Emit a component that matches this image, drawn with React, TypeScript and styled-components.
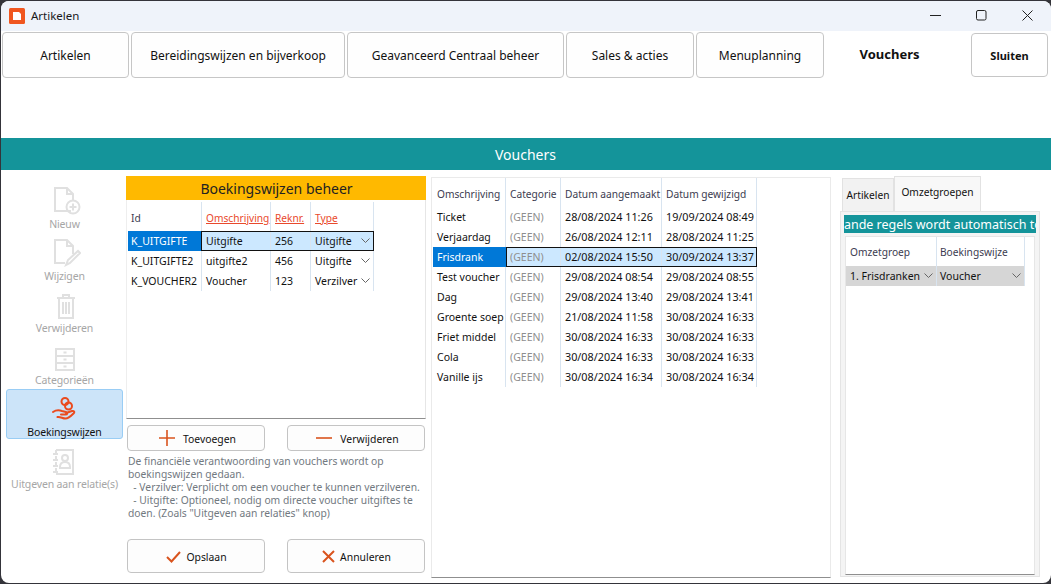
import React from "react";
import styled, { createGlobalStyle, css } from "styled-components";

const Global = createGlobalStyle`
  html, body { margin: 0; padding: 0; background: #34343a; }
  body { font-family: "Noto Sans", "Liberation Sans", sans-serif; font-size: 11px; color: #111; }
  #root { width: 1051px; height: 584px; overflow: hidden; }
  * { box-sizing: border-box; }
`;

const Win = styled.div`
  width: 1050px; height: 582px; background: #fff; display: flex; flex-direction: column;
  margin-top: 1px; margin-left: 1px; border-radius: 8px; overflow: hidden;
`;
const TitleBar = styled.div`
  height: 30px; flex: none; background: #eff3fa; display: flex; align-items: center; padding: 0 0 1px 8px;
`;
const TitleText = styled.span`
  font-size: 11.5px; margin-left: 6px; color: #1a1a1a; padding-bottom: 1px;
`;
const WinControls = styled.div`
  margin-left: auto; margin-right: 1px; display: flex; align-items: center; height: 100%;
`;
const WinButton = styled.div`
  width: 46px; height: 100%; display: flex; align-items: center; justify-content: center; padding-bottom: 1px;
`;
const TabBar = styled.div`
  height: 46px; flex: none; margin-top: 1px; padding: 0 3px 0 1px; display: flex; gap: 2px; align-items: stretch;
`;
const Tab = styled.div<{ $w: number; $active?: boolean }>`
  width: ${p => p.$w}px; flex: none; display: flex; align-items: center; justify-content: center;
  background: #fefefe; border-radius: 4px; font-size: 12px; color: #111;
  ${p => p.$active
    ? css`font-weight: 700; font-size: 13px; padding-bottom: 2px; background: #fff;`
    : css`border: 1px solid #c6c6c6;`}
`;
const CloseTab = styled.div`
  width: 77px; flex: none; margin: 1px 0 1px auto; display: flex; align-items: center; justify-content: center;
  border: 1px solid #c6c6c6; border-radius: 4px; font-weight: 700; font-size: 11px;
`;
const Spacer = styled.div`
  height: 60px; flex: none;
`;
const Banner = styled.div`
  height: 32px; flex: none; background: #14949a; color: #fff; font-size: 14px;
  display: flex; align-items: center; justify-content: center; padding-right: 1px;
`;
const Body = styled.div`
  flex: 1; min-height: 0; display: flex;
`;
const Sidebar = styled.div`
  width: 124px; flex: none; padding: 11px 2px 0 5px; display: flex; flex-direction: column; gap: 2px;
`;
const SideItem = styled.div<{ $active?: boolean }>`
  height: 50px; display: flex; flex-direction: column; align-items: center; justify-content: flex-end;
  border-radius: 3px; font-size: 10.5px; letter-spacing: -0.15px; color: ${p => p.$active ? "#111" : "#a6a6a6"}; white-space: nowrap;
  svg { display: block; flex: none; }
  span { line-height: 14px; height: 14px; margin-top: 2px; }
  ${p => p.$active && css`
    background: #cce4f9; border: 1px solid #99cdf5;
    span { margin-bottom: -1px; }
  `}
`;
const MidPanel = styled.div`
  width: 300px; flex: none; margin-left: 1px; padding-top: 6px; display: flex; flex-direction: column;
`;
const PanelHead = styled.div`
  height: 24px; flex: none; background: #ffb900; display: flex; align-items: center; justify-content: center; font-size: 14px; color: #222; padding-left: 1px;
`;
const TableBox = styled.div`
  height: 219px; flex: none; background: #fff; border-bottom: 1px solid #8f8f8f; border-left: 1px solid #eee; border-right: 1px solid #e6e6e6; padding: 2px 0 0 1px;
  & > div > div:first-child { padding-left: 3px; }
`;
const Row = styled.div<{ $cols: string; $h: number; $focusLeft?: number; $focusW?: number }>`
  display: grid; grid-template-columns: ${p => p.$cols}; height: ${p => p.$h}px; position: relative;
  ${p => p.$focusLeft !== undefined && css`
    &::after { content: ""; position: absolute; top: 0; bottom: 0; left: ${p.$focusLeft}px; width: ${p.$focusW}px; border: 1px solid #111; pointer-events: none; }
  `}
`;
const Cell = styled.div<{ $tone?: "sel" | "focus" | "muted" | "gray"; $num?: boolean }>`
  display: flex; align-items: center; justify-content: space-between; padding: 0 3px 1px 4px; white-space: nowrap; overflow: hidden;
  border-right: 1px solid ${p => p.$tone === "sel" ? "#0078d7" : "#d8e4f0"}; font-size: ${p => p.$num ? 10.8 : 10.5}px;
  color: ${p => p.$tone === "muted" ? "#8e8e8e" : p.$tone === "sel" ? "#fff" : "#111"};
  ${p => p.$tone === "sel" && css`background: #0078d7;`}
  ${p => p.$tone === "focus" && css`background: #cce8ff;`}
  ${p => p.$tone === "gray" && css`background: #d6d6d6;`}
`;
const HeadCell = styled.div<{ $link?: boolean; $top: number }>`
  display: flex; align-items: center; padding: ${p => p.$top}px 1px 0 4px; white-space: nowrap;
  border-right: 1px solid #d8e4f0; font-size: 10.2px; color: ${p => p.$link ? "#e9492c" : "#3c3c50"};
  ${p => p.$link && css`text-decoration: underline;`}
`;
const MutedFocus = styled(Cell)`
  background: #cce8ff; color: #8e8e8e;
`;
const BtnRow = styled.div<{ $top: number }>`
  display: flex; justify-content: space-between; padding: 0 1px; margin-top: ${p => p.$top}px;
`;
const Btn = styled.div<{ $h: number }>`
  width: 138px; height: ${p => p.$h}px; border: 1px solid #c4c4c4; border-radius: 4px; background: #fdfdfd;
  display: flex; align-items: center; justify-content: center; gap: 8px; font-size: 10.4px; padding: 1px 0 0 3px;
  svg { margin-top: -1px; }
`;
const SaveBtn = styled(Btn)`
  gap: 5px; padding: 2px 0 0 1px;
`;
const Help = styled.div`
  margin: 4px 0 0 2px; width: 296px; color: #72797f; font-size: 10.3px; line-height: 13px; height: 66px;
`;
const HelpLine = styled.div`
  white-space: pre;
`;
const GridPanel = styled.div`
  width: 400px; flex: none; margin: 7px 0 5px 5px; border: 1px solid #eaeaea; border-bottom: 1px solid #8f8f8f; padding: 0 0 0 1px;
`;
const RightPanel = styled.div`
  width: 200px; flex: none; margin-left: 9px; padding-top: 6px; display: flex; flex-direction: column;
`;
const RTabs = styled.div`
  height: 35px; flex: none; display: flex; align-items: flex-end; padding-left: 2px;
`;
const RTab = styled.div<{ $active?: boolean }>`
  display: flex; align-items: center; justify-content: center; font-size: 10.2px;
  border: 1px solid #e2e2e2; border-bottom: none; background: ${p => p.$active ? "#f8f8f8" : "#f2f2f2"};
  width: ${p => p.$active ? 87 : 52}px; height: ${p => p.$active ? 35 : 33}px;
  padding-bottom: ${p => p.$active ? 4 : 0}px;
`;
const RBody = styled.div`
  height: 366px; flex: none; background: #f4f4f4; border: 1px solid #e4e4e4; padding: 3px 3px 1px 3px; display: flex; flex-direction: column; width: 200px;
`;
const Ticker = styled.div`
  height: 18px; flex: none; background: #14949a; color: #fff; font-size: 12.5px; overflow: hidden; white-space: nowrap; display: flex; align-items: center; justify-content: center;
`;
const RTable = styled.div`
  flex: 1; margin: 3px 1px 0 1px; background: #fff; border: 1px solid #e6e6e6; border-bottom: 1px solid #8f8f8f;
  & > div > div:nth-child(2) { padding-left: 3px; }
`;
const Chev = () => (
  <svg width="9" height="5" viewBox="0 0 9 5" fill="none" stroke="#666" strokeWidth="1" style={{ flex: "none" }}>
    <path d="M0.5 0.5 L4.5 4.5 L8.5 0.5" />
  </svg>
);

const G = "#e0e0e0";
const NewIcon = () => (
  <svg width="32" height="28" viewBox="-4 0 32 28" fill="none" stroke={G} strokeWidth="2">
    <path d="M18 24H2V1h12l6 6v6M14 1v6h6" /><circle cx="20" cy="20" r="6.5" /><path d="M20 16.5v7M16.5 20h7" />
  </svg>
);
const EditIcon = () => (
  <svg width="32" height="28" viewBox="-4 0 32 28" fill="none" stroke={G} strokeWidth="2">
    <path d="M12 24H2V1h12l6 6v8M14 1v6h6" /><path d="M13 26l2-5 10-9 2 2-10 10z" />
  </svg>
);
const TrashIcon = () => (
  <svg width="22" height="25" viewBox="-2 0 22 25" fill="none" stroke={G} strokeWidth="2">
    <path d="M1 4h18M7 4V1h6v3M3 4v20h14V4M7 8v12M10 8v12M13 8v12" />
  </svg>
);
const CabinetIcon = () => (
  <svg width="20" height="23" viewBox="0 0 20 23" fill="none" stroke={G} strokeWidth="2">
    <path d="M1 1h18v21H1zM1 8h18M1 15h18M8.500 4.500h3M8.500 11.500h3M8.500 18.500h3" />
  </svg>
);
const HandIcon = () => (
  <svg width="26" height="26" viewBox="0 0 26 26" fill="none" stroke="#ea4b1f" strokeWidth="2" strokeLinecap="round">
    <circle cx="13" cy="4.500" r="3.500" /><circle cx="16.500" cy="9" r="3.500" />
    <path d="M1 15c3-2 6-2 9-1l4 1c2 .5 1.500 2.500-.5 2.500H9M14 16l6-2c2-.5 3 1 1.500 2.500-2 2-5 5-8 5-3 0-5-2-8-1.500" />
  </svg>
);
const ContactIcon = () => (
  <svg width="26" height="26" viewBox="0 0 26 26" fill="none" stroke={G} strokeWidth="2">
    <path d="M4 1h17v24H4M4 1v3M4 7v3M4 13v3M4 19v3M1 5h5M1 11h5M1 17h5M1 23h5" />
    <circle cx="13" cy="9" r="3" /><path d="M8 18c0-3 2-5 5-5s5 2 5 5v1H8z" />
  </svg>
);
const Plus = () => (
  <svg width="16" height="16" viewBox="0 0 16 16" stroke="#d9541e" strokeWidth="1.600"><path d="M0 8h16M8 0v16" /></svg>
);
const Minus = () => (
  <svg width="16" height="16" viewBox="0 0 16 16" stroke="#d9541e" strokeWidth="1.600"><path d="M0 8h16" /></svg>
);
const Check = () => (
  <svg width="15" height="12" viewBox="0 0 15 12" fill="none" stroke="#d9541e" strokeWidth="2"><path d="M1 6l4.500 4.500L14 1" /></svg>
);
const Cross = () => (
  <svg width="13" height="13" viewBox="0 0 13 13" fill="none" stroke="#d9541e" strokeWidth="2"><path d="M1 1l11 11M12 1L1 12" /></svg>
);

const bCols = "74px 69px 40px 63px";
const vCols = "73px 55px 101px 95px";
const rCols = "91px 88px";

const vouchers = [
  ["Ticket", "28/08/2024 11:26", "19/09/2024 08:49"],
  ["Verjaardag", "26/08/2024 12:11", "28/08/2024 11:25"],
  ["Frisdrank", "02/08/2024 15:50", "30/09/2024 13:37"],
  ["Test voucher", "29/08/2024 08:54", "29/08/2024 08:55"],
  ["Dag", "29/08/2024 13:40", "29/08/2024 13:41"],
  ["Groente soep", "21/08/2024 11:58", "30/08/2024 16:33"],
  ["Friet middel", "30/08/2024 16:33", "30/08/2024 16:33"],
  ["Cola", "30/08/2024 16:33", "30/08/2024 16:33"],
  ["Vanille ijs", "30/08/2024 16:34", "30/08/2024 16:34"],
];

const modes = [
  ["K_UITGIFTE", "Uitgifte", "256", "Uitgifte"],
  ["K_UITGIFTE2", "uitgifte2", "456", "Uitgifte"],
  ["K_VOUCHER2", "Voucher", "123", "Verzilver"],
];

export default function App() {
  return (
    <Win>
      <Global />
      <TitleBar>
        <svg width="16" height="16" viewBox="0 0 16 16">
          <rect width="16" height="16" rx="1.500" fill="#f0561f" />
          <path d="M4 4h6l2 2v6H4z" fill="#fff" />
        </svg>
        <TitleText>Artikelen</TitleText>
        <WinControls>
          <WinButton>
            <svg width="11" height="11" viewBox="0 0 11 11" stroke="#222"><path d="M0 5.500h11" /></svg>
          </WinButton>
          <WinButton>
            <svg width="11" height="11" viewBox="0 0 11 11" fill="none" stroke="#222"><rect x=".5" y=".5" width="9.500" height="9.500" rx="1.500" /></svg>
          </WinButton>
          <WinButton>
            <svg width="11" height="11" viewBox="0 0 11 11" fill="none" stroke="#222"><path d="M.5.5l10 10M10.500.5l-10 10" /></svg>
          </WinButton>
        </WinControls>
      </TitleBar>
      <TabBar>
        <Tab $w={127}>Artikelen</Tab>
        <Tab $w={214}>Bereidingswijzen en bijverkoop</Tab>
        <Tab $w={217}>Geavanceerd Centraal beheer</Tab>
        <Tab $w={128}>Sales &amp; acties</Tab>
        <Tab $w={128}>Menuplanning</Tab>
        <Tab $w={127} $active>Vouchers</Tab>
        <CloseTab>Sluiten</CloseTab>
      </TabBar>
      <Spacer />
      <Banner>Vouchers</Banner>
      <Body>
        <Sidebar>
          <SideItem><NewIcon /><span>Nieuw</span></SideItem>
          <SideItem><EditIcon /><span>Wijzigen</span></SideItem>
          <SideItem><TrashIcon /><span>Verwijderen</span></SideItem>
          <SideItem><CabinetIcon /><span>Categorieën</span></SideItem>
          <SideItem $active><HandIcon /><span>Boekingswijzen</span></SideItem>
          <SideItem><ContactIcon /><span>Uitgeven aan relatie(s)</span></SideItem>
        </Sidebar>
        <MidPanel>
          <PanelHead>Boekingswijzen beheer</PanelHead>
          <TableBox>
            <Row $cols={bCols} $h={29}>
              <HeadCell $top={3}>Id</HeadCell>
              <HeadCell $top={3} $link>Omschrijving</HeadCell>
              <HeadCell $top={3} $link>Reknr.</HeadCell>
              <HeadCell $top={3} $link>Type</HeadCell>
            </Row>
            {modes.map((m, i) => {
              const sel = i === 0;
              const tone = sel ? "focus" : undefined;
              return (
                <Row key={m[0]} $cols={bCols} $h={20} $focusLeft={sel ? 73 : undefined} $focusW={171}>
                  <Cell $tone={sel ? "sel" : undefined}>{m[0]}</Cell>
                  <Cell $tone={tone}>{m[1]}</Cell>
                  <Cell $tone={tone}>{m[2]}</Cell>
                  <Cell $tone={tone}>{m[3]}<Chev /></Cell>
                </Row>
              );
            })}
          </TableBox>
          <BtnRow $top={6}>
            <Btn $h={26}><Plus /><span>Toevoegen</span></Btn>
            <Btn $h={26}><Minus /><span>Verwijderen</span></Btn>
          </BtnRow>
          <Help>
            <HelpLine>De financiële verantwoording van vouchers wordt op</HelpLine>
            <HelpLine>boekingswijzen gedaan.</HelpLine>
            <HelpLine>  - Verzilver: Verplicht om een voucher te kunnen verzilveren.</HelpLine>
            <HelpLine>  - Uitgifte: Optioneel, nodig om directe voucher uitgiftes te</HelpLine>
            <HelpLine>doen. (Zoals "Uitgeven aan relaties" knop)</HelpLine>
          </Help>
          <BtnRow $top={18}>
            <SaveBtn $h={34}><Check /><span>Opslaan</span></SaveBtn>
            <SaveBtn $h={34}><Cross /><span>Annuleren</span></SaveBtn>
          </BtnRow>
        </MidPanel>
        <GridPanel>
          <Row $cols={vCols} $h={29}>
            <HeadCell $top={2}>Omschrijving</HeadCell>
            <HeadCell $top={2}>Categorie</HeadCell>
            <HeadCell $top={2}>Datum aangemaakt</HeadCell>
            <HeadCell $top={2}>Datum gewijzigd</HeadCell>
          </Row>
          {vouchers.map((v, i) => {
            const sel = i === 2;
            const tone = sel ? "focus" : undefined;
            return (
              <Row key={v[0]} $cols={vCols} $h={20} $focusLeft={sel ? 73 : undefined} $focusW={249}>
                <Cell $tone={sel ? "sel" : undefined}>{v[0]}</Cell>
                {sel ? <MutedFocus>(GEEN)</MutedFocus> : <Cell $tone="muted">(GEEN)</Cell>}
                <Cell $tone={tone} $num>{v[1]}</Cell>
                <Cell $tone={tone} $num>{v[2]}</Cell>
              </Row>
            );
          })}
        </GridPanel>
        <RightPanel>
          <RTabs>
            <RTab>Artikelen</RTab>
            <RTab $active>Omzetgroepen</RTab>
          </RTabs>
          <RBody>
            <Ticker>onderstaande regels wordt automatisch toegepast</Ticker>
            <RTable>
              <Row $cols={rCols} $h={29}>
                <HeadCell $top={0}>Omzetgroep</HeadCell>
                <HeadCell $top={0}>Boekingswijze</HeadCell>
              </Row>
              <Row $cols={rCols} $h={20}>
                <Cell $tone="gray">1. Frisdranken<Chev /></Cell>
                <Cell $tone="gray">Voucher<Chev /></Cell>
              </Row>
            </RTable>
          </RBody>
        </RightPanel>
      </Body>
    </Win>
  );
}
